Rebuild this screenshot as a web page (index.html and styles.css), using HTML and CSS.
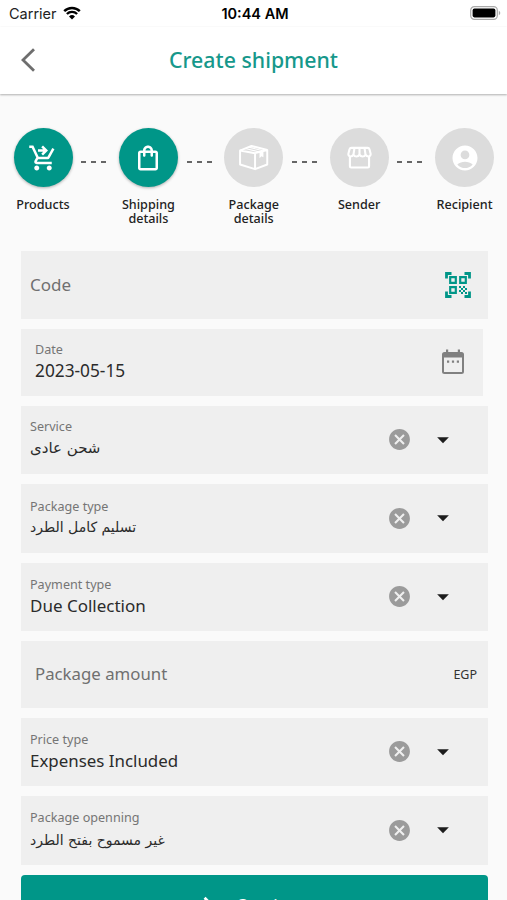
FILE: index.html
```
<!DOCTYPE html>
<html lang="en">
<head>
    <meta charset="UTF-8">
    <meta name="viewport" content="width=device-width, initial-scale=1.0">
    <title>Create shipment</title>
    <link rel="stylesheet" href="styles.css">
</head>
<body>

    <!-- shared icons -->
    <svg class="sprite">
        <symbol id="clear" viewBox="0 0 24 24">
            <path d="M12 2C6.47 2 2 6.47 2 12s4.47 10 10 10 10-4.47 10-10S17.53 2 12 2zm5 13.59L15.59 17 12 13.41 8.41 17 7 15.59 10.59 12 7 8.41 8.41 7 12 10.59 15.59 7 17 8.41 13.41 12 17 15.59z"/>
        </symbol>
        <symbol id="arrow" viewBox="0 0 24 24">
            <path d="M6.6 9.5l5.4 5.5 5.4-5.5z"/>
        </symbol>
    </svg>

    <div class="status-bar">
        <div class="carrier">
            <span>Carrier</span>
            <svg class="wifi" viewBox="0 0 18 14">
                <path d="M1.2 5.2a11 11 0 0 1 15.6 0M3.9 8a7.2 7.2 0 0 1 10.2 0" fill="none" stroke="#000" stroke-width="2.4"/>
                <path d="M9 13.6l3-3.1a4.3 4.3 0 0 0-6 0z"/>
            </svg>
        </div>
        <div class="time">10:44 AM</div>
        <svg class="battery" viewBox="0 0 31 14">
            <rect x=".7" y=".7" width="26.6" height="12.6" rx="3.6" fill="#fff" stroke="#aaa" stroke-width="1.2"/>
            <rect x="2.6" y="2.6" width="22.8" height="8.8" rx="1.8"/>
            <path d="M28.8 4.8c2 .8 2 3.6 0 4.4z" fill="#aaa"/>
        </svg>
    </div>

    <header class="app-bar">
        <svg class="back" viewBox="0 0 14 24">
            <path d="M13 1.2L2 12l11 10.8" fill="none" stroke="#6e6e6e" stroke-width="2.8"/>
        </svg>
        <h1>Create shipment</h1>
    </header>

    <div class="steps">
        <div class="step active">
            <div class="circle">
                <svg viewBox="0 0 24 24">
                    <path d="M7 18c-1.1 0-1.99.9-1.99 2S5.9 22 7 22s2-.9 2-2-.9-2-2-2zm10 0c-1.1 0-1.99.9-1.99 2s.89 2 1.99 2 2-.9 2-2-.9-2-2-2zM8.1 13h7.45c.75 0 1.41-.41 1.75-1.03L21.16 4.96 19.42 4l-3.87 7H8.53L4.27 2H1v2h2l3.6 7.59-1.35 2.44C4.52 15.37 5.48 17 7 17h12v-2H7l1.1-2zM12 2l4 4-4 4-1.41-1.41L12.17 7H8V5h4.17l-1.59-1.59L12 2z"/>
                </svg>
            </div>
            <div class="label">Products</div>
        </div>
        <div class="dashes"><i></i><i></i><i></i></div>
        <div class="step active">
            <div class="circle">
                <svg viewBox="0 0 24 24">
                    <path d="M18 6h-2c0-2.21-1.79-4-4-4S8 3.79 8 6H6c-1.1 0-2 .9-2 2v12c0 1.1.9 2 2 2h12c1.1 0 2-.9 2-2V8c0-1.1-.9-2-2-2zm-6-2c1.1 0 2 .9 2 2h-4c0-1.1.9-2 2-2zm6 16H6V8h2v2c0 .55.45 1 1 1s1-.45 1-1V8h4v2c0 .55.45 1 1 1s1-.45 1-1V8h2v12z"/>
                </svg>
            </div>
            <div class="label">Shipping details</div>
        </div>
        <div class="dashes"><i></i><i></i><i></i></div>
        <div class="step">
            <div class="circle">
                <svg class="box" viewBox="0 0 30 26">
                    <path d="M2 6.3v13.5l14.5 4.500V8.800zM16.500 8.800L28.300 5.800v14l-11.800 4.500M2 6.300L13 1.800l15.300 4" fill="none" stroke="#fff" stroke-width="1.900" stroke-linejoin="round"/>
                    <path d="M7 4.300l14 3.400M10.500 3l13.500 3.400" fill="none" stroke="#fff" stroke-width="1.100"/>
                    <path d="M20.800 7.500l3.800-1v6.200l-1.900-1-1.900 2z" fill="#fff"/>
                </svg>
            </div>
            <div class="label">Package details</div>
        </div>
        <div class="dashes"><i></i><i></i><i></i></div>
        <div class="step">
            <div class="circle">
                <svg class="store" viewBox="0 0 26 24">
                    <path d="M4.500 2h17a2 2 0 0 1 1.900 1.400L24.600 8c.3 1.500-.8 3-2.300 3-1.300 0-2.300-.8-3-2-.6 1.200-1.800 2-3.100 2s-2.500-.8-3.200-2c-.7 1.200-1.900 2-3.200 2S7.300 10.200 6.700 9c-.7 1.200-1.700 2-3 2-1.500 0-2.600-1.500-2.300-3l1.200-4.600A2 2 0 0 1 4.500 2zM7.700 2.500L6.700 9M13 2.500V9M18.300 2.500l1 6.500M3 11v10.200c0 .7.500 1.200 1.200 1.200h17.600c.7 0 1.200-.5 1.200-1.200V11" fill="none" stroke="#fff" stroke-width="2.200" stroke-linejoin="round"/>
                </svg>
            </div>
            <div class="label">Sender</div>
        </div>
        <div class="dashes"><i></i><i></i><i></i></div>
        <div class="step">
            <div class="circle">
                <svg viewBox="0 0 24 24">
                    <path d="M12 2C6.48 2 2 6.48 2 12s4.48 10 10 10 10-4.48 10-10S17.52 2 12 2zm0 4c1.93 0 3.5 1.57 3.5 3.5S13.93 13 12 13s-3.5-1.57-3.5-3.5S10.07 6 12 6zm0 14c-2.03 0-4.43-.82-6.14-2.88C7.55 15.8 9.68 15 12 15s4.45.8 6.14 2.12C16.43 19.18 14.03 20 12 20z"/>
                </svg>
            </div>
            <div class="label">Recipient</div>
        </div>
    </div>

    <form class="form">
        <div class="field code">
            <div class="placeholder">Code</div>
            <svg class="qr" viewBox="0 0 26 26">
                <path d="M1.500 6.500v-5h5M19.500 1.500h5v5M1.500 19.500v5h5M19.500 24.500h5v-5" fill="none" stroke="#009688" stroke-width="2.800"/>
                <path d="M5.200 5.200h5.600v5.600H5.200zM15.200 5.200h5.600v5.600h-5.600zM5.200 15.200h5.600v5.600H5.200z" fill="none" stroke="#009688" stroke-width="2.200"/>
                <path d="M14 14h2v2h-2zM18 14h2v2h-2zM16 16h2v2h-2zM20 16h2v2h-2zM14 18h2v2h-2zM18 18h2v2h-2zM16 20h2v2h-2zM20 20h2v2h-2z" fill="#009688"/>
            </svg>
        </div>
        <div class="field date">
            <div class="text">
                <div class="name">Date</div>
                <div class="value digits">2023-05-15</div>
            </div>
            <svg class="calendar" viewBox="0 0 24 26">
                <path d="M5 .5h2.200V3h9.600V.5H19V3h1.500A2.500 2.500 0 0 1 23 5.500v17a2.500 2.500 0 0 1-2.500 2.500h-17A2.500 2.500 0 0 1 1 22.500v-17A2.500 2.500 0 0 1 3.500 3H5zM3 8.500v14.500h18V8.500zM6 11.500h2.200v2.200H6zm4.900 0h2.200v2.200h-2.200zm4.900 0H18v2.200h-2.200z" fill="#808080"/>
            </svg>
        </div>
        <div class="field select service">
            <div class="text">
                <div class="name">Service</div>
                <div class="value arabic" lang="ar" dir="rtl">شحن عادى</div>
            </div>
            <svg class="clear"><use href="#clear"/></svg>
            <svg class="arrow"><use href="#arrow"/></svg>
        </div>
        <div class="field select package-type">
            <div class="text">
                <div class="name">Package type</div>
                <div class="value arabic" lang="ar" dir="rtl">تسليم كامل الطرد</div>
            </div>
            <svg class="clear"><use href="#clear"/></svg>
            <svg class="arrow"><use href="#arrow"/></svg>
        </div>
        <div class="field select payment">
            <div class="text">
                <div class="name">Payment type</div>
                <div class="value">Due Collection</div>
            </div>
            <svg class="clear"><use href="#clear"/></svg>
            <svg class="arrow"><use href="#arrow"/></svg>
        </div>
        <div class="field amount">
            <div class="placeholder">Package amount</div>
            <div class="currency">EGP</div>
        </div>
        <div class="field select price">
            <div class="text">
                <div class="name">Price type</div>
                <div class="value">Expenses Included</div>
            </div>
            <svg class="clear"><use href="#clear"/></svg>
            <svg class="arrow"><use href="#arrow"/></svg>
        </div>
        <div class="field select opening">
            <div class="text">
                <div class="name">Package openning</div>
                <div class="value arabic" lang="ar" dir="rtl">غير مسموح بفتح الطرد</div>
            </div>
            <svg class="clear"><use href="#clear"/></svg>
            <svg class="arrow"><use href="#arrow"/></svg>
        </div>
        <button type="button" class="continue">
            <svg viewBox="0 0 24 24"><path d="M5 2l10 10L5 22" fill="none" stroke="#fff" stroke-width="3"/></svg>
            <span>Continue</span>
        </button>
    </form>

</body>
</html>
```
FILE: styles.css
```
* {
    box-sizing: border-box;
}
body {
    margin: 0;
    height: 900px;
    overflow: hidden;
    background-color: #fafafa;
    color: #222;
    font-family: "Noto Sans", "Open Sans", sans-serif;
}
svg {
    display: block;
    flex: none;
}
.sprite {
    display: none;
}
.status-bar {
    display: grid;
    grid-template-columns: 1fr auto 1fr;
    align-items: center;
    height: 27px;
    padding: 0 6px 0 9px;
    background: white;
    color: #000;
    font-family: Inter, sans-serif;
    font-size: 14.5px;
}
.carrier {
    display: flex;
    align-items: center;
    gap: 6px;
    color: #222;
}
.wifi {
    width: 18px;
    height: 14px;
    margin-top: -2px;
}
.time {
    font-weight: 600;
    font-size: 14.5px;
}
.battery {
    width: 31px;
    height: 14px;
    margin-top: -1px;
    justify-self: end;
}
.app-bar {
    display: grid;
    grid-template-columns: 60px 1fr 60px;
    align-items: center;
    height: 67px;
    padding-bottom: 2px;
    background: white;
    box-shadow: 0 1px 2px rgba(0, 0, 0, 0.3);
}
.back {
    width: 14px;
    height: 24px;
    margin-left: 21px;
}
h1 {
    margin: 0;
    text-align: center;
    color: #16988b;
    font-size: 21.3px;
    font-weight: 500;
}
.steps {
    display: flex;
    justify-content: space-between;
    height: 156.5px;
    padding: 34px 12.5px 0 13px;
}
.step {
    display: flex;
    flex-direction: column;
    align-items: center;
    width: 60px;
}
.circle {
    display: flex;
    align-items: center;
    justify-content: center;
    width: 59px;
    height: 59px;
    flex: none;
    border-radius: 50%;
    background: #dcdcdc;
}
.active .circle {
    background: #009688;
    box-shadow: 0 1px 3px rgba(0, 0, 0, 0.3);
}
.circle svg {
    width: 30px;
    height: 30px;
    fill: white;
}
.circle .box {
    width: 31px;
    height: 27px;
}
.circle .store {
    width: 25px;
    height: 23px;
}
.label {
    margin-top: 10.5px;
    text-align: center;
    color: #222;
    font-size: 12.6px;
    font-weight: 500;
    line-height: 14.5px;
}
.dashes {
    display: flex;
    gap: 5px;
    margin: 0 2px 0 -2px;
    padding-top: 33px;
}
.dashes i {
    width: 5px;
    height: 2px;
    background: #666;
}
.form {
    display: flex;
    flex-direction: column;
    gap: 10px;
    padding: 0 19.5px 0 20.5px;
}
.field {
    display: flex;
    align-items: center;
    height: 68px;
    padding-left: 9.5px;
    background: #efefef;
}
.select {
    height: 68.5px;
}
.text,
.placeholder {
    flex: 1;
}
.name {
    color: #757575;
    font-size: 12.6px;
    line-height: 18px;
}
.value {
    color: #2b2b2b;
    font-size: 17px;
    line-height: 23px;
}
.price .value {
    font-size: 16.9px;
}
.digits {
    font-size: 17.3px;
}
.arabic {
    width: max-content;
    font-family: "DejaVu Sans", sans-serif;
    font-size: 14px;
}
.service .arabic {
    font-size: 15px;
    line-height: 25px;
}
.opening .text {
    padding-top: 2px;
}
.opening .arabic {
    line-height: 26px;
}
.placeholder {
    padding-bottom: 1px;
    color: #707070;
    font-size: 17px;
}
.clear {
    width: 25px;
    height: 25px;
    margin-right: 18px;
    fill: #9b9b9b;
}
.arrow {
    width: 26px;
    height: 26px;
    margin-right: 32px;
    fill: #1c1c1c;
}
.qr {
    width: 26px;
    height: 26px;
    margin-right: 17px;
}
.date {
    height: 67px;
    margin-right: 5px;
    padding-left: 14.5px;
}
.date .text {
    padding-bottom: 1px;
}
.calendar {
    width: 24px;
    height: 26px;
    margin-right: 18px;
}
.amount {
    height: 66.5px;
    padding-left: 14.5px;
}
.amount .placeholder {
    font-size: 16.8px;
}
.currency {
    margin-right: 10.5px;
    color: #333;
    font-size: 12.5px;
}
.continue {
    display: flex;
    align-items: flex-start;
    justify-content: center;
    gap: 14px;
    height: 68px;
    padding-top: 20px;
    border: none;
    border-radius: 4px;
    background: #009688;
    color: white;
    font-family: inherit;
    font-size: 17px;
    line-height: 20px;
}
.continue svg {
    width: 22px;
    height: 22px;
    margin-top: 1px;
}
```
